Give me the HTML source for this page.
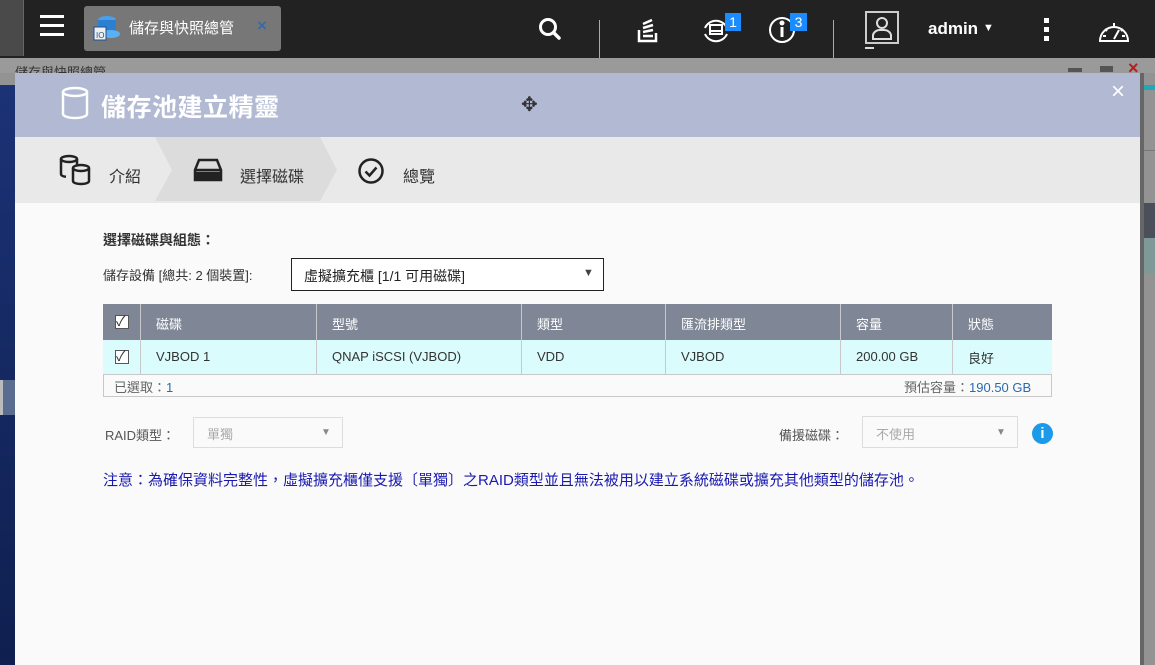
<!DOCTYPE html>
<html><head><meta charset="utf-8"><style>
*{margin:0;padding:0;box-sizing:border-box}
body{width:1155px;height:665px;overflow:hidden;position:relative;background:#939393;font-family:"Liberation Sans","Noto Sans CJK TC",sans-serif;font-size:13px;color:#333}
.abs{position:absolute}
.top{left:0;top:0;width:1155px;height:58px;background:#222}
.t{white-space:nowrap}
</style></head><body>
<div class="abs top"></div>
<div class="abs" style="left:0;top:0;width:24px;height:56px;background:#4a4a4a;border-right:1px solid #666"></div>
<div class="abs" style="left:40px;top:15px;width:24px;height:3px;background:#fff"></div>
<div class="abs" style="left:40px;top:24px;width:24px;height:3px;background:#fff"></div>
<div class="abs" style="left:40px;top:33px;width:24px;height:3px;background:#fff"></div>
<div class="abs" style="left:84px;top:6px;width:197px;height:45px;background:#777;border-radius:3px"></div>
<svg class="abs" style="left:93px;top:14px" width="28" height="28" viewBox="0 0 28 28"><ellipse cx="14" cy="6" rx="9" ry="4" fill="#4aa0e8"/><rect x="5" y="6" width="18" height="16" fill="#2d7fd0"/><ellipse cx="18" cy="20" rx="9" ry="4" fill="#5ab0f0"/><rect x="1" y="13" width="12" height="13" fill="#eee" stroke="#1a4f9a"/><text x="3" y="24" font-size="8" fill="#1a4f9a" font-family="Liberation Sans">IO</text></svg>
<div class="abs t" style="left:129px;top:17px;font-size:15px;color:#fff">儲存與快照總管</div>
<div class="abs t" style="left:257px;top:16px;font-size:17px;color:#3a6aa0;font-weight:bold">×</div>
<svg class="abs" style="left:538px;top:17px" width="26" height="26" viewBox="0 0 26 26"><circle cx="10" cy="10" r="7.5" fill="none" stroke="#fff" stroke-width="3"/><line x1="15.5" y1="15.5" x2="21" y2="21" stroke="#fff" stroke-width="3.5" stroke-linecap="round"/></svg>
<div class="abs" style="left:599px;top:20px;width:1px;height:38px;background:#aaa"></div>
<div class="abs" style="left:833px;top:20px;width:1px;height:38px;background:#aaa"></div>
<svg class="abs" style="left:633px;top:14px" width="30" height="30" viewBox="0 0 30 30" fill="none" stroke="#fff" stroke-width="2.5"><path d="M6 16v11h17v-8"/><path d="M10 22h10M10 18l10-2M10 14l10-3M10 10l9-4"/></svg>
<svg class="abs" style="left:700px;top:14px" width="32" height="32" viewBox="0 0 32 32" fill="none" stroke="#fff" stroke-width="2"><path d="M5 14a12 12 0 0 1 22 0M27 20a12 12 0 0 1-22 0"/><rect x="10" y="11" width="12" height="9"/><path d="M10 17h12"/></svg>
<div class="abs t" style="left:725px;top:13px;width:16px;height:18px;background:#1a8cff;color:#fff;font-size:14px;text-align:center;line-height:18px">1</div>
<svg class="abs" style="left:767px;top:14px" width="32" height="32" viewBox="0 0 32 32" fill="none" stroke="#fff" stroke-width="2"><circle cx="15" cy="16" r="12"/><path d="M15 13v10" stroke-width="3"/><circle cx="15" cy="9" r="1.5" fill="#fff"/></svg>
<div class="abs t" style="left:790px;top:13px;width:17px;height:18px;background:#1a8cff;color:#fff;font-size:14px;text-align:center;line-height:18px">3</div>
<div class="abs" style="left:865px;top:11px;width:34px;height:33px;border:2px solid #ccc"></div>
<svg class="abs" style="left:867px;top:13px" width="30" height="30" viewBox="0 0 30 30" fill="none" stroke="#ddd" stroke-width="2"><circle cx="15" cy="10" r="5"/><path d="M6 26v-4a7 6 0 0 1 7-5h4a7 6 0 0 1 7 5v4z"/></svg>
<div class="abs" style="left:865px;top:47px;width:9px;height:2px;background:#ddd"></div>
<div class="abs t" style="left:928px;top:19px;font-size:17px;color:#fff;font-weight:bold">admin</div>
<div class="abs t" style="left:983px;top:22px;font-size:11px;color:#fff">▼</div>
<div class="abs" style="left:1044px;top:18px;width:5px;height:5px;background:#fff"></div>
<div class="abs" style="left:1044px;top:27px;width:5px;height:5px;background:#fff"></div>
<div class="abs" style="left:1044px;top:36px;width:5px;height:5px;background:#fff"></div>
<svg class="abs" style="left:1097px;top:15px" width="34" height="30" viewBox="0 0 34 30" fill="none" stroke="#fff" stroke-width="2"><path d="M3 26a14 14 0 1 1 28 0z"/><path d="M17 24l5-9M17 8v3M8 14l2 2M26 14l-2 2M6 21h3M25 21h3"/></svg>
<div class="abs" style="left:0;top:58px;width:1155px;height:15px;background:#9a9a9a"></div>
<div class="abs t" style="left:15px;top:62px;font-size:13px;color:#333">儲存與快照總管</div>
<div class="abs" style="left:0;top:85px;width:15px;height:580px;background:linear-gradient(#1b3275,#0f1f4f)"></div>
<div class="abs" style="left:0;top:380px;width:15px;height:35px;background:#5a6c90"></div>
<div class="abs" style="left:0;top:380px;width:3px;height:35px;background:#bbb"></div>
<div class="abs" style="left:1068px;top:68px;width:14px;height:4px;background:#555"></div>
<div class="abs" style="left:1100px;top:66px;width:13px;height:6px;background:#555"></div>
<div class="abs t" style="left:1128px;top:58px;font-size:18px;color:#b02020;font-weight:bold">×</div>
<div class="abs" style="left:1140px;top:85px;width:15px;height:5px;background:#20a8b8"></div>
<div class="abs" style="left:1140px;top:150px;width:15px;height:1px;background:#777"></div>
<div class="abs" style="left:1140px;top:203px;width:15px;height:35px;background:#4a4f5a"></div>
<div class="abs" style="left:1140px;top:238px;width:15px;height:35px;background:#7f9999"></div>
<div class="abs" style="left:1140px;top:73px;width:4px;height:592px;background:#666"></div>
<div class="abs" style="left:15px;top:73px;width:1125px;height:64px;background:#b1b9d3"></div>
<svg class="abs" style="left:60px;top:86px" width="30" height="34" viewBox="0 0 30 34" fill="none" stroke="#fff" stroke-width="2.5"><ellipse cx="15" cy="6" rx="12" ry="4"/><path d="M3 6v22c0 2 5 4 12 4s12-2 12-4V6"/></svg>
<div class="abs t" style="left:101px;top:88px;font-size:25px;color:#fff;font-weight:bold;letter-spacing:0.5px">儲存池建立精靈</div>
<div class="abs t" style="left:521px;top:92px;font-size:20px;color:#333">✥</div>
<div class="abs t" style="left:1111px;top:78px;font-size:24px;color:#fff">×</div>
<div class="abs" style="left:15px;top:137px;width:1125px;height:66px;background:#e9e9e9"></div>
<svg class="abs" style="left:15px;top:137px" width="340" height="66"><polygon points="140,0 305,0 322,33 305,64 140,64 157,33" fill="#dcdcdc"/></svg>
<svg class="abs" style="left:58px;top:154px" width="36" height="32" viewBox="0 0 36 32" fill="none" stroke="#222" stroke-width="2.5"><ellipse cx="11" cy="5" rx="8" ry="3"/><path d="M3 5v15c0 1.5 2 2.5 5 2.8M19 5v6"/><ellipse cx="23" cy="14" rx="8" ry="3" fill="#e9e9e9"/><path d="M15 14v13c0 2 4 3 8 3s8-1 8-3V14"/></svg>
<div class="abs t" style="left:109px;top:163px;font-size:16px;color:#333">介紹</div>
<svg class="abs" style="left:193px;top:158px" width="30" height="24" viewBox="0 0 30 24" fill="none" stroke="#222" stroke-width="2.5"><path d="M6 2h18l4 10v10H2V12z"/><path d="M2 12h26"/><rect x="4" y="15" width="22" height="6" fill="#222"/></svg>
<div class="abs t" style="left:240px;top:163px;font-size:16px;color:#333">選擇磁碟</div>
<svg class="abs" style="left:357px;top:157px" width="28" height="28" viewBox="0 0 28 28" fill="none" stroke="#222" stroke-width="2.5"><circle cx="14" cy="14" r="11.5"/><path d="M8.5 14.5l4 4 7-8"/></svg>
<div class="abs t" style="left:403px;top:163px;font-size:16px;color:#333">總覽</div>
<div class="abs" style="left:15px;top:203px;width:1125px;height:462px;background:#fafafa"></div>
<div class="abs t" style="left:103px;top:230px;font-size:14px;font-weight:bold;color:#333">選擇磁碟與組態：</div>
<div class="abs t" style="left:103px;top:265px;font-size:13px;color:#333">儲存設備 [總共: 2 個裝置]:</div>
<div class="abs" style="left:291px;top:258px;width:313px;height:33px;border:1px solid #222;background:#fff"></div>
<div class="abs t" style="left:304px;top:266px;font-size:14px;color:#222">虛擬擴充櫃 [1/1 可用磁碟]</div>
<div class="abs t" style="left:583px;top:267px;font-size:11px;color:#444">▼</div>
<div class="abs" style="left:103px;top:304px;width:949px;height:93px;border:1px solid #c8c8c8;background:#fafafa"></div>
<div class="abs" style="left:103px;top:304px;width:949px;height:36px;background:#7f8796"></div>
<div class="abs" style="left:103px;top:340px;width:949px;height:35px;background:#dafcfc;border-bottom:1px solid #c8c8c8"></div>
<div class="abs" style="left:140px;top:304px;width:1px;height:71px;background:#c8c8c8"></div>
<div class="abs" style="left:316px;top:304px;width:1px;height:71px;background:#c8c8c8"></div>
<div class="abs" style="left:521px;top:304px;width:1px;height:71px;background:#c8c8c8"></div>
<div class="abs" style="left:665px;top:304px;width:1px;height:71px;background:#c8c8c8"></div>
<div class="abs" style="left:840px;top:304px;width:1px;height:71px;background:#c8c8c8"></div>
<div class="abs" style="left:952px;top:304px;width:1px;height:71px;background:#c8c8c8"></div>
<div class="abs" style="left:115px;top:315px;width:14px;height:14px;background:#fff;border:1px solid #555"></div>
<div class="abs t" style="left:116px;top:311px;font-size:14px;color:#333">✓</div>
<div class="abs" style="left:115px;top:350px;width:14px;height:14px;background:#fff;border:1px solid #555"></div>
<div class="abs t" style="left:116px;top:346px;font-size:14px;color:#333">✓</div>
<div class="abs t" style="left:156px;top:314px;color:#fff">磁碟</div>
<div class="abs t" style="left:332px;top:314px;color:#fff">型號</div>
<div class="abs t" style="left:537px;top:314px;color:#fff">類型</div>
<div class="abs t" style="left:681px;top:314px;color:#fff">匯流排類型</div>
<div class="abs t" style="left:856px;top:314px;color:#fff">容量</div>
<div class="abs t" style="left:968px;top:314px;color:#fff">狀態</div>
<div class="abs t" style="left:156px;top:349px">VJBOD 1</div>
<div class="abs t" style="left:332px;top:349px">QNAP iSCSI (VJBOD)</div>
<div class="abs t" style="left:537px;top:349px">VDD</div>
<div class="abs t" style="left:681px;top:349px">VJBOD</div>
<div class="abs t" style="left:856px;top:349px">200.00 GB</div>
<div class="abs t" style="left:968px;top:348px">良好</div>
<div class="abs t" style="left:114px;top:377px;font-size:13px;color:#666">已選取：<span style="color:#2a6ab0">1</span></div>
<div class="abs t" style="left:904px;top:377px;font-size:13px;color:#666">預估容量：<span style="color:#2a6ab0">190.50 GB</span></div>
<div class="abs t" style="left:105px;top:425px;color:#555">RAID類型：</div>
<div class="abs" style="left:193px;top:417px;width:150px;height:31px;border:1px solid #ddd;background:#fafafa"></div>
<div class="abs t" style="left:207px;top:424px;color:#aaa">單獨</div>
<div class="abs t" style="left:321px;top:427px;font-size:10px;color:#888">▼</div>
<div class="abs t" style="left:779px;top:425px;color:#555">備援磁碟：</div>
<div class="abs" style="left:862px;top:416px;width:156px;height:32px;border:1px solid #ddd;background:#fafafa"></div>
<div class="abs t" style="left:876px;top:424px;color:#aaa">不使用</div>
<div class="abs t" style="left:996px;top:427px;font-size:10px;color:#888">▼</div>
<div class="abs" style="left:1032px;top:423px;width:21px;height:21px;border-radius:50%;background:#1a9ae8;color:#fff;font-weight:bold;font-size:15px;text-align:center;line-height:21px">i</div>
<div class="abs t" style="left:103px;top:469px;font-size:15px;color:#1a1ab0">注意：為確保資料完整性，虛擬擴充櫃僅支援〔單獨〕之RAID類型並且無法被用以建立系統磁碟或擴充其他類型的儲存池。</div>
</body></html>
